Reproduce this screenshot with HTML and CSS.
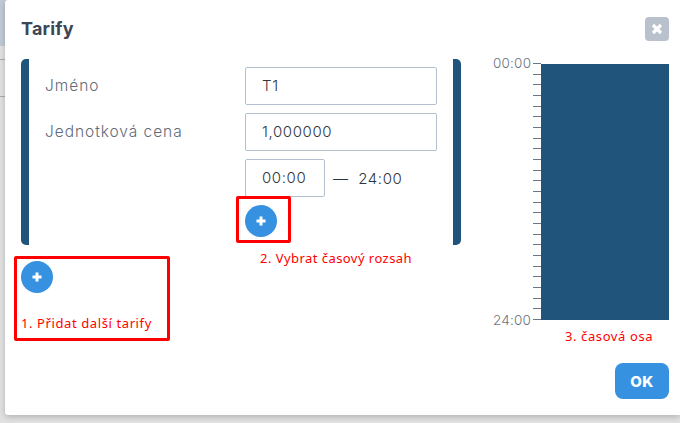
FILE: index.html
```html
<!DOCTYPE html>
<html lang="cs">
<head>
<meta charset="utf-8">
<title>Tarify</title>
<link rel="stylesheet" href="styles.css">
</head>
<body>
<div class="backdrop">
  <div class="modal">
    <header class="modal-head">
      <h2 class="title">Tarify</h2>
      <button class="close" type="button" aria-label="Zavřít">
        <svg width="12" height="12" viewBox="0 0 12 12"><path d="M2 2l8 8M10 2l-8 8" stroke="#fff" stroke-width="3.2" fill="none"/></svg>
      </button>
    </header>
    <div class="modal-body">
      <div class="left">
        <section class="tariff">
          <div class="row">
            <label class="label">Jméno</label>
            <div class="input wide">T1</div>
          </div>
          <div class="row">
            <label class="label">Jednotková cena</label>
            <div class="input wide">1,000000</div>
          </div>
          <div class="row">
            <span class="label"></span>
            <div class="input short">00:00</div>
            <span class="range">— &nbsp;24:00</span>
          </div>
          <div class="row add-range">
            <span class="label"></span>
            <div class="mark mark-range">
              <button class="plus" type="button" aria-label="Přidat"><svg width="10" height="10" viewBox="0 0 10 10"><path d="M5 .5v9M.5 5h9" stroke="#fff" stroke-width="3"/></svg></button>
            </div>
          </div>
        </section>
        <div class="note note-range">2. Vybrat časový rozsah</div>
        <div class="mark mark-tariff">
          <button class="plus" type="button" aria-label="Přidat"><svg width="10" height="10" viewBox="0 0 10 10"><path d="M5 .5v9M.5 5h9" stroke="#fff" stroke-width="3"/></svg></button>
          <div class="note">1. Přidat další tarify</div>
        </div>
      </div>
      <aside class="timeline">
        <div class="axis">
          <div class="hours"><span>00:00</span><span>24:00</span></div>
          <div class="ticks"></div>
          <div class="bar"></div>
        </div>
        <div class="note note-axis">3. časová osa</div>
      </aside>
    </div>
    <footer class="modal-foot"><button class="ok" type="button">OK</button></footer>
  </div>
</div>
</body>
</html>
```

FILE: styles.css
```css
* { box-sizing: border-box; }
html, body { margin: 0; height: 100%; }
body {
  overflow: hidden;
  font-family: Inter, "Open Sans", sans-serif;
  background:
    linear-gradient(#c2cad4, #c2cad4) 0 0 / 100% 46px no-repeat,
    linear-gradient(#adadad, #adadad) 0 59px / 100% 1px no-repeat,
    linear-gradient(#adadad, #adadad) 0 96px / 100% 1px no-repeat,
    #e2e2e2;
}
.backdrop { height: 423px; padding: 0 0 8px 5px; }
.modal { height: 415px; background: #fff; display: flex; flex-direction: column; padding: 0 11px 16px 16px; position: relative; border-radius: 3px 0 0 3px; box-shadow: 0 2px 6px rgba(0, 0, 0, .22); }
.modal-head { height: 59px; display: flex; justify-content: space-between; align-items: flex-start; }
.title { margin: 18px 0 0; font-size: 18px; line-height: 22px; font-weight: 700; letter-spacing: .2px; color: #3c4654; }
.close { margin: 17px 0 0; width: 24px; height: 24px; border: 0; border-radius: 4px; background: #b9c2cc; padding: 0; display: flex; align-items: center; justify-content: center; }
.modal-body { flex: 1; display: flex; }
.left { width: 440px; flex: none; position: relative; }
.tariff { width: 440px; height: 186px; border-left: 8px solid #20547b; border-right: 8px solid #20547b; border-radius: 5px; padding-top: 8px; }
.row { display: flex; align-items: center; margin-bottom: 8px; height: 38px; }
.label { width: 216px; padding: 0 0 1px 16px; font-size: 15.5px; font-weight: 300; letter-spacing: .95px; color: #5f6b7a; flex: none; }
.input { height: 38px; border: 1px solid #b4c0cf; border-radius: 2px; font-size: 15px; font-weight: 300; letter-spacing: .6px; color: #2f3640; padding: 0 16px; line-height: 36px; }
.wide { width: 192px; }
.short { width: 80px; }
.range { margin-left: 8px; font-size: 15px; font-weight: 300; letter-spacing: .6px; color: #2f3640; }
.add-range { height: 32px; margin: -2px 0 0; position: relative; }
.plus { width: 32px; height: 32px; border: 0; border-radius: 50%; background: #3691e0; padding: 0; display: flex; align-items: center; justify-content: center; }
.mark { position: absolute; border: 3px solid #f00; border-radius: 2px; }
.mark-range { left: 0; top: -7px; width: 55px; height: 47px; margin-left: 207px; padding: 6px 0 0 6px; }
.mark-tariff { left: -7px; top: 197px; width: 156px; height: 85px; padding: 2px 0 0 4px; }
.note { font-family: "Noto Sans", "Open Sans", sans-serif; font-size: 13px; color: #f00; letter-spacing: .45px; white-space: nowrap; }
.mark-tariff .note { margin: 21px 0 0 0; letter-spacing: .6px; }
.note-range { position: absolute; left: 239px; top: 190px; }
.timeline { width: 184px; flex: none; margin-left: 24px; position: relative; }
.axis { height: 256px; position: relative; margin-top: 5px; display: flex; }
.hours { width: 36px; margin-left: 8px; display: flex; flex-direction: column; justify-content: space-between; font-size: 13.5px; font-weight: 300; line-height: 16px; letter-spacing: .2px; color: #6a7480; height: 273px; margin-top: -9px; flex: none; }
.ticks { width: 8px; margin-left: 4px; height: 257px; margin-top: -1px; flex: none; background: repeating-linear-gradient(to bottom, #6b7785 0, #6b7785 1px, transparent 1px, transparent 10.667px); }
.bar { width: 128px; height: 256px; background: #20547b; flex: none; }
.note-axis { position: absolute; left: 80px; top: 268px; letter-spacing: .6px; }
.modal-foot { display: flex; justify-content: flex-end; }
.ok { width: 54px; height: 36px; border: 0; border-radius: 8px; background: #3691e0; color: #fff; font: 800 15px Inter, sans-serif; letter-spacing: .4px; }
```
